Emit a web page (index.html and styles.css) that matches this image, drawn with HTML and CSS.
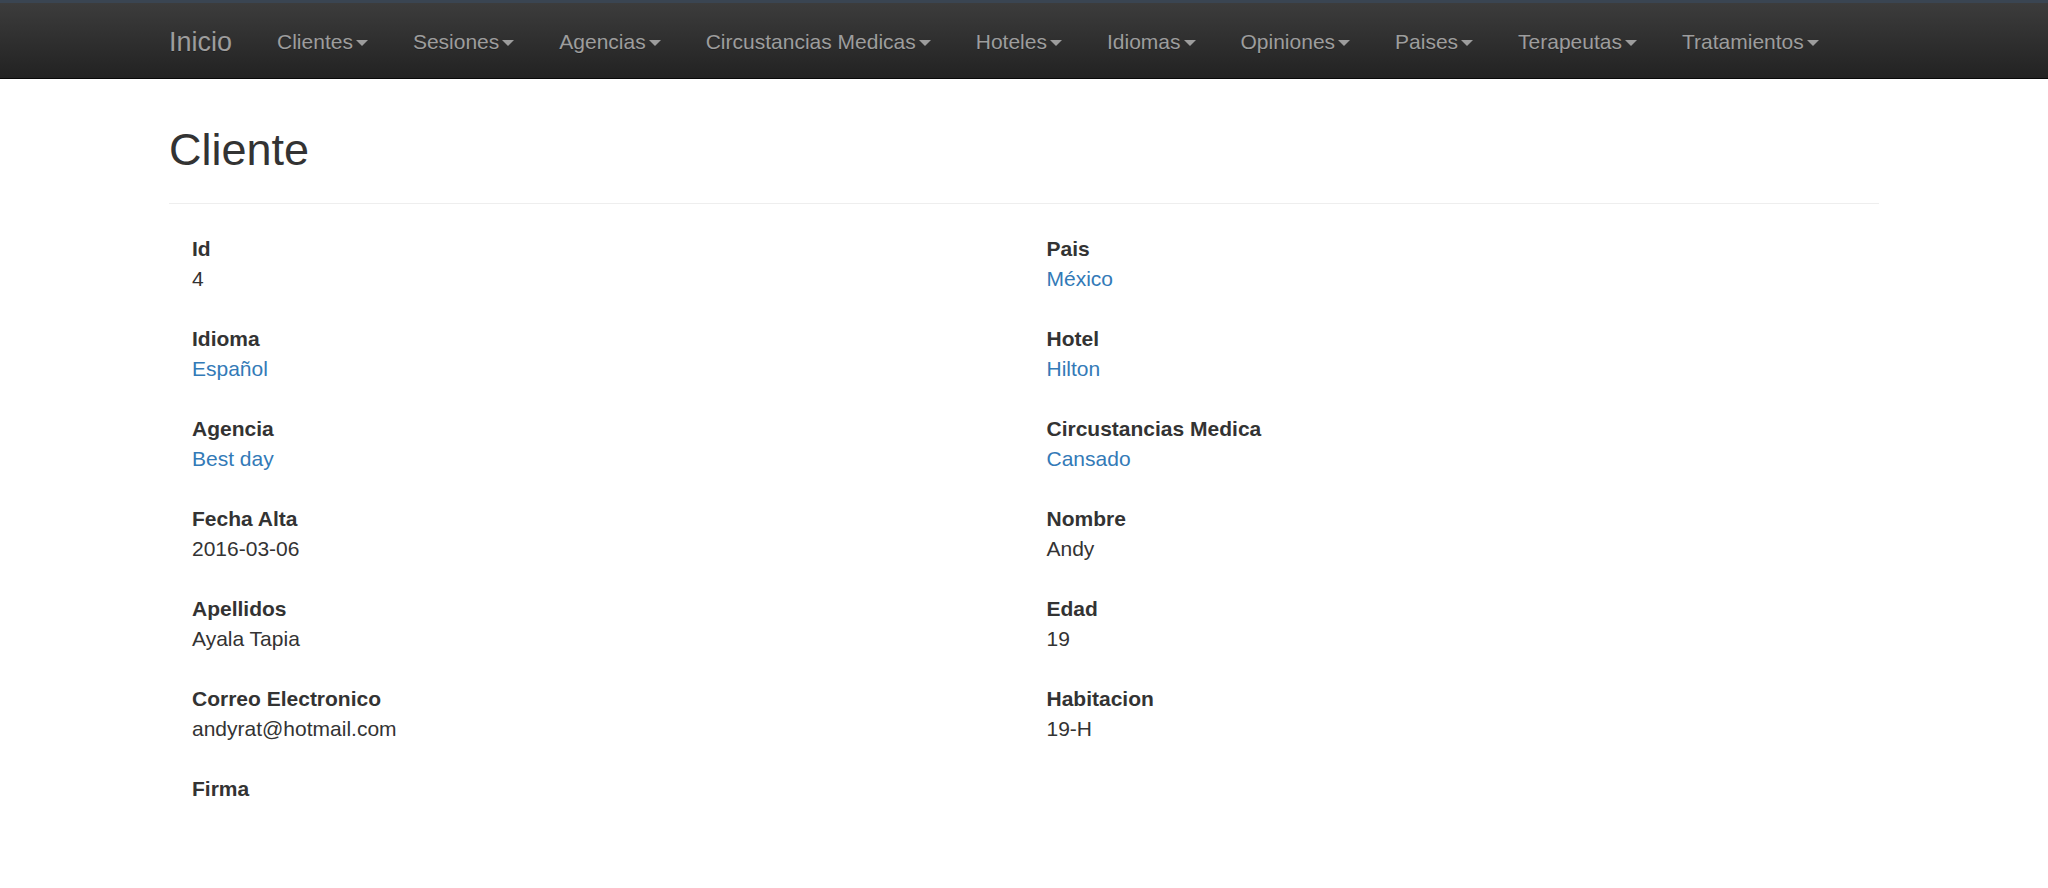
FILE: index.html
```html
<!DOCTYPE html>
<html lang="es">
<head>
<meta charset="utf-8">
<title>Cliente</title>
<link rel="stylesheet" href="styles.css">
</head>
<body>
<div class="topline"></div>
<nav class="navbar">
  <div class="nav-container">
    <a class="brand" href="#">Inicio</a>
    <ul class="nav">
      <li><a href="#">Clientes<span class="caret"></span></a></li>
      <li><a href="#">Sesiones<span class="caret"></span></a></li>
      <li><a href="#">Agencias<span class="caret"></span></a></li>
      <li><a href="#">Circustancias Medicas<span class="caret"></span></a></li>
      <li><a href="#">Hoteles<span class="caret"></span></a></li>
      <li><a href="#">Idiomas<span class="caret"></span></a></li>
      <li><a href="#">Opiniones<span class="caret"></span></a></li>
      <li><a href="#">Paises<span class="caret"></span></a></li>
      <li><a href="#">Terapeutas<span class="caret"></span></a></li>
      <li><a href="#">Tratamientos<span class="caret"></span></a></li>
    </ul>
  </div>
</nav>
<main class="container">
  <div class="page-header">
    <h2>Cliente</h2>
  </div>
  <div class="details">
    <div class="col col-left">
      <div class="field"><div class="label">Id</div><div class="value">4</div></div>
      <div class="field"><div class="label">Idioma</div><div class="value"><a href="#">Español</a></div></div>
      <div class="field"><div class="label">Agencia</div><div class="value"><a href="#">Best day</a></div></div>
      <div class="field"><div class="label">Fecha Alta</div><div class="value">2016-03-06</div></div>
      <div class="field"><div class="label">Apellidos</div><div class="value">Ayala Tapia</div></div>
      <div class="field"><div class="label">Correo Electronico</div><div class="value">andyrat@hotmail.com</div></div>
      <div class="field"><div class="label">Firma</div></div>
    </div>
    <div class="col col-right">
      <div class="field"><div class="label">Pais</div><div class="value"><a href="#">México</a></div></div>
      <div class="field"><div class="label">Hotel</div><div class="value"><a href="#">Hilton</a></div></div>
      <div class="field"><div class="label">Circustancias Medica</div><div class="value"><a href="#">Cansado</a></div></div>
      <div class="field"><div class="label">Nombre</div><div class="value">Andy</div></div>
      <div class="field"><div class="label">Edad</div><div class="value">19</div></div>
      <div class="field"><div class="label">Habitacion</div><div class="value">19-H</div></div>
    </div>
  </div>
</main>
</body>
</html>
```

FILE: styles.css
```css
* { box-sizing: border-box; }

html, body {
  margin: 0;
  padding: 0;
  background: #fff;
}

body {
  font-family: "Liberation Sans", Arial, Helvetica, sans-serif;
  font-size: 21px;
  line-height: 30px;
  color: #333;
}

a {
  color: #337ab7;
  text-decoration: none;
}

.topline {
  height: 3px;
  background: #3a4552;
}

.navbar {
  height: 76px;
  background-image: linear-gradient(to bottom, #3c3c3c 0, #222 100%);
  border-bottom: 1px solid #080808;
}

.nav-container {
  width: 1710px;
  margin: 0 auto;
  display: flex;
  align-items: flex-start;
}

.brand {
  display: block;
  padding: 23.5px 22.5px 21.5px 0;
  font-size: 27px;
  line-height: 30px;
  color: #9d9d9d;
  text-shadow: 0 1px 0 rgba(0, 0, 0, .25);
}

.nav {
  display: flex;
  list-style: none;
  margin: 0;
  padding: 0;
}

.nav a {
  display: block;
  padding: 23.5px 22.5px 21.5px;
  font-size: 21px;
  line-height: 30px;
  color: #9d9d9d;
  text-shadow: 0 1px 0 rgba(0, 0, 0, .25);
}

.caret {
  display: inline-block;
  width: 0;
  height: 0;
  margin-left: 3px;
  vertical-align: middle;
  border-top: 6px solid #9d9d9d;
  border-left: 6px solid transparent;
  border-right: 6px solid transparent;
}

.container {
  width: 1710px;
  margin: 0 auto;
}

.page-header {
  margin-top: 45.5px;
  padding-bottom: 13.5px;
  border-bottom: 1px solid #eee;
  margin-bottom: 30px;
}

.page-header h2 {
  margin: 0 0 15px;
  font-size: 45px;
  line-height: 49.5px;
  font-weight: 500;
  color: #333;
}

.details {
  display: grid;
  grid-template-columns: 1fr 1fr;
  column-gap: 45px;
}

.col-left {
  padding-left: 23px;
}

.col-right {
  padding-left: 0;
}

.field {
  margin-bottom: 30px;
}

.label {
  font-weight: bold;
}
```
